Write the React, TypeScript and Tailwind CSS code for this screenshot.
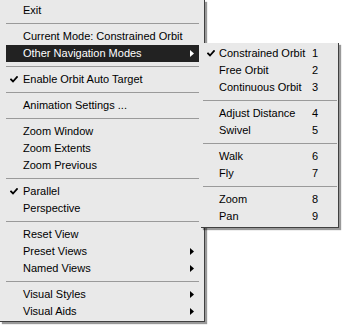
import React from "react";

type Entry =
  | { kind: "sep" }
  | {
      kind: "item";
      label: string;
      checked?: boolean;
      submenu?: boolean;
      active?: boolean;
      key?: string;
    };

const mainItems: Entry[] = [
  { kind: "item", label: "Exit" },
  { kind: "sep" },
  { kind: "item", label: "Current Mode: Constrained Orbit" },
  { kind: "item", label: "Other Navigation Modes", submenu: true, active: true },
  { kind: "sep" },
  { kind: "item", label: "Enable Orbit Auto Target", checked: true },
  { kind: "sep" },
  { kind: "item", label: "Animation Settings ..." },
  { kind: "sep" },
  { kind: "item", label: "Zoom Window" },
  { kind: "item", label: "Zoom Extents" },
  { kind: "item", label: "Zoom Previous" },
  { kind: "sep" },
  { kind: "item", label: "Parallel", checked: true },
  { kind: "item", label: "Perspective" },
  { kind: "sep" },
  { kind: "item", label: "Reset View" },
  { kind: "item", label: "Preset Views", submenu: true },
  { kind: "item", label: "Named Views", submenu: true },
  { kind: "sep" },
  { kind: "item", label: "Visual Styles", submenu: true },
  { kind: "item", label: "Visual Aids", submenu: true },
];

const subItems: Entry[] = [
  { kind: "item", label: "Constrained Orbit", key: "1", checked: true },
  { kind: "item", label: "Free Orbit", key: "2" },
  { kind: "item", label: "Continuous Orbit", key: "3" },
  { kind: "sep" },
  { kind: "item", label: "Adjust Distance", key: "4" },
  { kind: "item", label: "Swivel", key: "5" },
  { kind: "sep" },
  { kind: "item", label: "Walk", key: "6" },
  { kind: "item", label: "Fly", key: "7" },
  { kind: "sep" },
  { kind: "item", label: "Zoom", key: "8" },
  { kind: "item", label: "Pan", key: "9" },
];

function Check() {
  return (
    <svg width="8" height="7" viewBox="0 0 8 7" className="block">
      <path
        d="M1 3.5 L3 5.5 L7 1"
        fill="none"
        stroke="#000"
        strokeWidth="1.8"
        strokeLinecap="square"
      />
    </svg>
  );
}

function Arrow({ white }: { white?: boolean }) {
  return (
    <svg width="4" height="7" viewBox="0 0 4 7" className="block">
      <path d="M0 0 L4 3.5 L0 7 Z" fill={white ? "#fff" : "#000"} />
    </svg>
  );
}

function Separator() {
  return (
    <div className="flex h-[9px] items-center">
      <div className="h-px w-full bg-[#9a9a9a]" />
    </div>
  );
}

function MainMenu() {
  return (
    <div className="relative h-[322px] w-[205px] border-r border-b border-[#404040] bg-[#e9e9e9] pt-[2px] shadow-[2px_2px_1px_rgba(0,0,0,0.4)]">
      <div className="pl-[6px] pr-[5px]">
        {mainItems.map((e, i) =>
          e.kind === "sep" ? (
            <Separator key={i} />
          ) : (
            <div
              key={i}
              className={`flex h-[17px] items-center ${
                e.active ? "bg-[#222222] text-white" : "text-black"
              }`}
            >
              <div className="flex w-[17px] justify-start pl-[4px]">
                {e.checked && <Check />}
              </div>
              <span className="flex-1 whitespace-nowrap">{e.label}</span>
              <div className="w-[10px] pl-[1px]">
                {e.submenu && <Arrow white={e.active} />}
              </div>
            </div>
          )
        )}
      </div>
    </div>
  );
}

function SubMenu() {
  return (
    <div className="absolute left-[201px] top-[43px] h-[185px] w-[138px] border-r border-b border-[#404040] bg-[#e9e9e9] pt-[2px] shadow-[2px_2px_1px_rgba(0,0,0,0.4)]">
      <div className="pl-[2px] pr-[1px]">
        {subItems.map((e, i) =>
          e.kind === "sep" ? (
            <Separator key={i} />
          ) : (
            <div key={i} className="flex h-[17px] items-center text-black">
              <div className="flex w-[16px] justify-start pl-[4px]">
                {e.checked && <Check />}
              </div>
              <span className="w-[93px] whitespace-nowrap">{e.label}</span>
              <span className="whitespace-nowrap">{e.key}</span>
            </div>
          )
        )}
      </div>
    </div>
  );
}

export default function App() {
  return (
    <div className="relative h-[327px] w-[350px] overflow-hidden bg-white font-['Liberation_Sans',Arial,sans-serif] text-[11px] leading-none">
      <MainMenu />
      <SubMenu />
    </div>
  );
}
